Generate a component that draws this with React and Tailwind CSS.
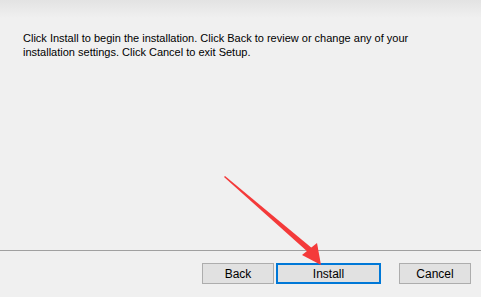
import React from 'react'

const font = { fontFamily: '"Liberation Sans", Arial, sans-serif' }

const Arrow = () => (
  <svg className="absolute left-0 top-0 pointer-events-none" width="481" height="297" viewBox="0 0 481 297">
    <polygon points="224,177 225,176 313,249 309,253" fill="#f43a3a" />
    <polygon points="321,265 302,255 317,243" fill="#f43a3a" />
  </svg>
)

const Button = ({ children, className = '' }) => (
  <button className={`h-[21px] flex items-center justify-center text-[12px] text-black bg-[#e1e1e1] ${className}`}>
    {children}
  </button>
)

export default function App() {
  return (
    <div className="relative w-[481px] h-[297px] overflow-hidden bg-[#f0f0f0]" style={font}>
      <div className="h-[250px] bg-gradient-to-b from-[#e3e3e3] to-[#f0f0f0] to-[18px]">
        <p className="pt-[31px] pl-[23px] text-[11px] leading-[14px] text-black">
          <span className="block">Click Install to begin the installation. Click Back to review or change any of your</span>
          <span className="block">installation settings. Click Cancel to exit Setup.</span>
        </p>
      </div>
      <div className="h-px bg-[#a0a0a0]" />
      <div className="flex pt-[12px] pl-[202px]">
        <Button className="w-[72px] border border-[#adadad]">Back</Button>
        <Button className="ml-[2px] w-[105px] border-2 border-[#0078d7]">Install</Button>
        <Button className="ml-[18px] w-[72px] border border-[#adadad]">Cancel</Button>
      </div>
      <Arrow />
    </div>
  )
}
